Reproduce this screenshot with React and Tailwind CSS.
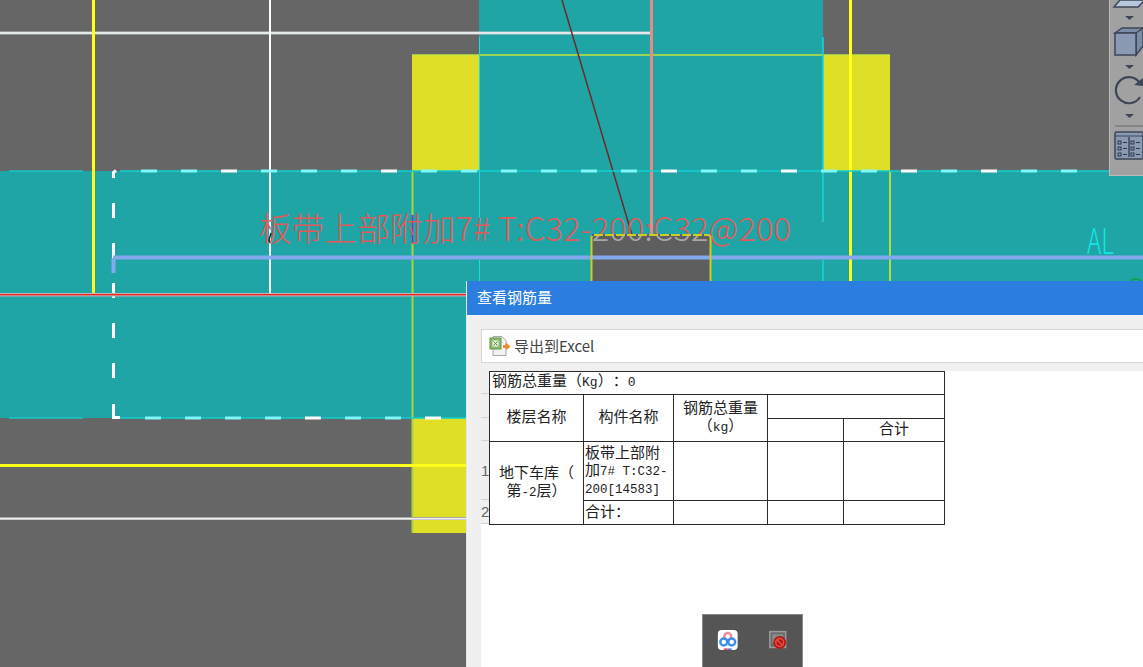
import React from "react";

const CJK = { fontFamily: '"Noto Sans CJK SC", "Noto Sans", sans-serif' };
const topDashes = [141,181,221,261,301,341,381,421,461,501,541,581,621,661,701,741,781,821,861,901,941,981,1021,1061];
const topLight = new Set([141,181,261,301,341,421,461,501,541,581,621,701,741,821,861,941,1021,1061]);
const botDashes = [145,185,225,265,305,345,385,425];
const botLight = new Set([145,185,225,265,345,385]);
const vertDashes = [203,243,283,323,363];

function Canvas() {
  return (
    <svg className="absolute inset-0" width="1143" height="667" viewBox="0 0 1143 667">
      <defs>
        <linearGradient id="notchText" gradientUnits="userSpaceOnUse" x1="0" y1="205" x2="0" y2="250">
          <stop offset="0.667" stopColor="#e05a5a" />
          <stop offset="0.667" stopColor="#a8a8a8" />
        </linearGradient>
      </defs>
      <rect x="412" y="55" width="478" height="116" fill="#dfdf28" />
      <rect x="412" y="418" width="731" height="115" fill="#dfdf28" />
      <rect x="479" y="0" width="344" height="171" fill="#20a5a6" />
      <rect x="0" y="171" width="1143" height="247" fill="#20a5a6" />
      <rect x="591" y="235" width="120" height="60" fill="#5e5e5e" />

      <line x1="412" y1="55" x2="890" y2="55" stroke="#c4e438" strokeWidth="1.5" />
      <rect x="411.5" y="171" width="2" height="362" fill="#a8d640" />
      <rect x="889" y="171" width="2" height="110" fill="#b4dc3c" />
      <line x1="479.5" y1="37" x2="479.5" y2="222" stroke="#16e0e0" strokeWidth="1" />
      <line x1="479.5" y1="260" x2="479.5" y2="281" stroke="#16e0e0" strokeWidth="1" />
      <line x1="823" y1="37" x2="823" y2="222" stroke="#14d8d8" strokeWidth="1.5" />
      <line x1="823" y1="260" x2="823" y2="281" stroke="#14d8d8" strokeWidth="1.5" />

      <line x1="0" y1="33" x2="650" y2="33" stroke="#b8c8c8" strokeWidth="3" />
      <line x1="0" y1="33" x2="650" y2="33" stroke="#f4f4f4" strokeWidth="1.5" />
      <rect x="650" y="0" width="3" height="235" fill="#ea8a80" />
      <line x1="562" y1="0" x2="632" y2="235" stroke="#6c2a2a" strokeWidth="1.5" />
      <rect x="92" y="0" width="3" height="293" fill="#ffff1a" />
      <rect x="269" y="0" width="2" height="293" fill="#ffffff" />
      <rect x="849" y="0" width="3" height="281" fill="#ffff1a" />
      <rect x="0" y="464" width="466" height="3" fill="#ffff1a" />
      <rect x="0" y="517" width="466" height="3" fill="#a8a8a8" />
      <rect x="0" y="518" width="466" height="1.5" fill="#f0f0f0" />

      <line x1="9" y1="171" x2="83" y2="171" stroke="#14c8c8" strokeWidth="1.5" />
      <line x1="120" y1="171" x2="1109" y2="171" stroke="#0fd0d0" strokeWidth="1.5" />
      <line x1="9" y1="418" x2="83" y2="418" stroke="#14c8c8" strokeWidth="1.5" />
      <line x1="120" y1="418" x2="466" y2="418" stroke="#0fd0d0" strokeWidth="1.5" />
      {topDashes.map((x) => (
        <rect key={x} x={x} y="169.5" width="16" height="3" fill={topLight.has(x) ? "#80f8f8" : "#ffffff"} />
      ))}
      {botDashes.map((x) => (
        <rect key={x} x={x} y="416.5" width="16" height="3" fill={botLight.has(x) ? "#80f8f8" : "#ffffff"} />
      ))}
      <path d="M113.500 178V172.500L116 170.500" fill="none" stroke="#ffffff" strokeWidth="3" />
      {vertDashes.map((y) => (
        <rect key={y} x="112" y={y} width="3" height="15" fill="#ffffff" />
      ))}
      <path d="M113.500 404V417.500H120" fill="none" stroke="#ffffff" strokeWidth="3" />

      <rect x="113" y="255.500" width="1030" height="4" fill="#84a8ee" />
      <rect x="111.500" y="258" width="4" height="15" fill="#84a8ee" />

      <rect x="0" y="293" width="466" height="3.500" fill="#b8b8b8" />
      <rect x="0" y="294" width="466" height="1.300" fill="#f02020" />

      <rect x="411.500" y="215" width="2" height="28" fill="#6a3cc0" />
      <path d="M271 233L269 240L270 243" fill="none" stroke="#202020" strokeWidth="1.500" />

      <text x="259" y="241" fill="#e05a5a" fontSize="32.500" textLength="532" style={{ ...CJK, fontWeight: 300 }}>
        板带上部附加7# T:C32-<tspan fill="url(#notchText)">200:C32</tspan>@200
      </text>

      <path d="M591.500 281V237L593 235H709L710.500 237V281" fill="none" stroke="#c8d020" strokeWidth="2" />
      <line x1="592" y1="235" x2="711" y2="235" stroke="#3a28c8" strokeWidth="1.500" strokeDasharray="2 9" />
      <text x="1087" y="254" fill="#14e4e4" fontSize="36" textLength="27" lengthAdjust="spacingAndGlyphs" style={{ ...CJK, fontWeight: 200 }}>AL</text>
      <path d="M1130 281Q1135 277 1141 281" fill="none" stroke="#1a9a40" strokeWidth="1.500" />
    </svg>
  );
}

function Arrow({ y }) {
  return <path d={`M1125 ${y}H1134L1129.500 ${y + 4}Z`} fill="#3c4656" />;
}

function SideToolbar() {
  return (
    <div className="absolute top-0 right-0 w-[34px] h-[176px] bg-[#a1a1a1] border-l border-b border-[#bcbcbc]">
      <svg className="absolute top-0" style={{ left: -1110 }} width="1143" height="176" viewBox="0 0 1143 176">
        <path d="M1114 7L1120 0H1143V2L1138 7Z" fill="#b8c8dc" stroke="#3c4656" strokeWidth="1.500" />
        <Arrow y={16} />
        <path d="M1115 33L1122 28H1143V46L1136 55V33Z" fill="#7d8ca6" stroke="#3c4656" strokeWidth="1.500" />
        <path d="M1136 33L1143 28" stroke="#3c4656" strokeWidth="1.500" />
        <rect x="1115" y="33" width="21" height="22" fill="#8a9ab4" stroke="#3c4656" strokeWidth="1.500" />
        <Arrow y={65} />
        <path d="M1139 82A13 13 0 1 0 1140 97" fill="none" stroke="#3c4656" strokeWidth="2.200" />
        <path d="M1134 85L1143 86V78Z" fill="#3c4656" />
        <Arrow y={114} />
        <rect x="1115" y="125.500" width="28" height="1" fill="#6a6a6a" />
        <rect x="1115" y="132" width="28" height="27" rx="1.500" fill="#8a9ab4" stroke="#3c4656" strokeWidth="1.500" />
        <line x1="1115" y1="136" x2="1143" y2="136" stroke="#3c4656" strokeWidth="1" />
        <line x1="1129" y1="137" x2="1129" y2="157" stroke="#3c4656" strokeWidth="1.500" />
        {[141, 147, 153].map((y) => (
          <g key={y} fill="none" stroke="#2c3646" strokeWidth="1">
            <rect x="1118" y={y} width="3" height="3" />
            <line x1="1123" y1={y + 1.5} x2="1127" y2={y + 1.5} />
            <rect x="1131" y={y} width="3" height="3" />
            <line x1="1136" y1={y + 1.5} x2="1140" y2={y + 1.5} />
          </g>
        ))}
      </svg>
    </div>
  );
}

function ExcelIcon() {
  return (
    <svg width="22" height="22" viewBox="0 0 22 22" className="shrink-0">
      <path d="M4 1.500H13L17 5.500V20.500H4Z" fill="#f2f2f2" stroke="#a8a8a8" />
      <rect x="1" y="3" width="11" height="11" fill="#8cba6c" stroke="#5f9a48" />
      <rect x="3.500" y="5.500" width="6" height="6" fill="#e8f2e0" />
      <path d="M4.500 6.500L8.500 10.500M8.500 6.500L4.500 10.500" stroke="#4f8a38" strokeWidth="1" />
      <path d="M14 10H17V7.500L21.500 11.500L17 15.500V13H14Z" fill="#f08a2c" />
    </svg>
  );
}

const td = "border border-[#2a2a2a] p-0 align-middle text-center";
const mono = { fontFamily: '"Liberation Mono", monospace' };
const line = "h-[17.500px] leading-[17.500px] whitespace-nowrap";

function DataTable() {
  return (
    <table className="table-fixed border-collapse bg-white text-[#222] text-[15px] leading-[17px] w-[455px] [text-spacing-trim:space-all]" style={CJK}>
      <colgroup>
        <col className="w-[94px]" />
        <col className="w-[90px]" />
        <col className="w-[94px]" />
        <col className="w-[76px]" />
        <col className="w-[101px]" />
      </colgroup>
      <tbody>
        <tr className="h-[23px]">
          <td colSpan={5} className={td + " !text-left pl-[2px] pb-[4px]"}>
            <div className="h-[16px] leading-[13px] whitespace-nowrap overflow-visible">
              钢筋总重量（<span className="text-[13px]" style={mono}>Kg</span>）：<span className="text-[13px]" style={mono}>0</span>
            </div>
          </td>
        </tr>
        <tr className="h-[24px]">
          <td rowSpan={2} className={td + " pb-[6px]"}>楼层名称</td>
          <td rowSpan={2} className={td + " pb-[6px]"}>构件名称</td>
          <td rowSpan={2} className={td + " pb-[5px]"}>
            <div className={line}>钢筋总重量</div>
            <div className={line}>（<span className="text-[13px]" style={mono}>kg</span>）</div>
          </td>
          <td colSpan={2} className={td}></td>
        </tr>
        <tr className="h-[23px]">
          <td className={td}></td>
          <td className={td + " pb-[5px]"}>合计</td>
        </tr>
        <tr className="h-[59px]">
          <td rowSpan={2} className={td + " pb-[5px]"}>
            <div className={line}>地下车库（</div>
            <div className={line}>第<span className="text-[12.500px]" style={mono}>-2</span>层）</div>
          </td>
          <td className={td + " !text-left pl-[1px] pb-[4px]"}>
            <div className={line}>板带上部附</div>
            <div className={line}>加<span className="text-[12.500px]" style={mono}>7# T:C32-</span></div>
            <div className={line}><span className="text-[12.500px]" style={mono}>200[14583]</span></div>
          </td>
          <td className={td}></td>
          <td className={td}></td>
          <td className={td}></td>
        </tr>
        <tr className="h-[24px]">
          <td className={td + " !text-left pl-[1px] pb-[5px]"}>合计：</td>
          <td className={td}></td>
          <td className={td}></td>
          <td className={td}></td>
        </tr>
      </tbody>
    </table>
  );
}

function RowHeaders() {
  const cell = "border-b border-[#d4d4d4] text-[15px] leading-none text-[#666] flex items-center";
  return (
    <div className="w-[8px] bg-[#f0f0f0] flex flex-col shrink-0" style={{ fontFamily: '"Liberation Sans", sans-serif' }}>
      <div className={cell + " h-[23px]"}></div>
      <div className={cell + " h-[24px]"}></div>
      <div className={cell + " h-[23px]"}></div>
      <div className={cell + " h-[59px]"}>1</div>
      <div className={cell + " h-[24px]"}>2</div>
    </div>
  );
}

function Dialog() {
  return (
    <div className="absolute left-[466px] top-[281px] w-[677px] h-[386px] flex flex-col bg-[#f0f0f0] border-l border-[#e4e6ee]">
      <div className="h-[34px] shrink-0 bg-[#2b7de0] text-white text-[15px] flex items-center pl-[10px] pb-[2px]" style={CJK}>
        查看钢筋量
      </div>
      <div className="flex-1 flex flex-col pl-[14px] pt-[14px] min-h-0">
        <div className="h-[34px] shrink-0 bg-white border border-[#d6d6d6] border-r-0 flex items-center pl-[7px]">
          <ExcelIcon />
          <span className="ml-[3px] text-[15px] text-[#444]" style={CJK}>导出到Excel</span>
        </div>
        <div className="mt-[8px] flex-1 bg-white flex items-start">
          <RowHeaders />
          <DataTable />
        </div>
      </div>
    </div>
  );
}

function TrayPopup() {
  return (
    <div className="absolute left-[702px] top-[614px] w-[101px] h-[53px] bg-[#555555] border-t border-l border-r border-[#8a8a8a] flex items-center">
      <svg width="100" height="52" viewBox="0 0 100 52">
        <rect x="15" y="15" width="20" height="20" rx="4" fill="#ffffff" />
        <circle cx="25" cy="21.500" r="3.500" fill="none" stroke="#f08a9a" strokeWidth="2.500" />
        <circle cx="21" cy="27" r="3.500" fill="none" stroke="#3a90e8" strokeWidth="2.500" />
        <circle cx="29" cy="27" r="3.500" fill="none" stroke="#3a90e8" strokeWidth="2.500" />
        <rect x="21" y="33.500" width="4" height="1.500" fill="#e84040" />
        <rect x="25" y="33.500" width="4" height="1.500" fill="#3a70e8" />
        <rect x="67.500" y="16.500" width="16" height="16" fill="#6a6a6a" stroke="#9a9aa0" strokeWidth="1.500" />
        <rect x="70" y="19" width="11" height="9" fill="#8a8a8a" />
        <circle cx="77.500" cy="27.500" r="6.500" fill="#b01818" />
        <circle cx="77.500" cy="27.500" r="4" fill="none" stroke="#e85040" strokeWidth="1.500" />
        <line x1="74.500" y1="24.500" x2="80.500" y2="30.500" stroke="#e85040" strokeWidth="1.500" />
      </svg>
    </div>
  );
}

export default function App() {
  return (
    <div className="relative w-[1143px] h-[667px] overflow-hidden bg-[#666666]">
      <Canvas />
      <SideToolbar />
      <Dialog />
      <TrayPopup />
    </div>
  );
}
